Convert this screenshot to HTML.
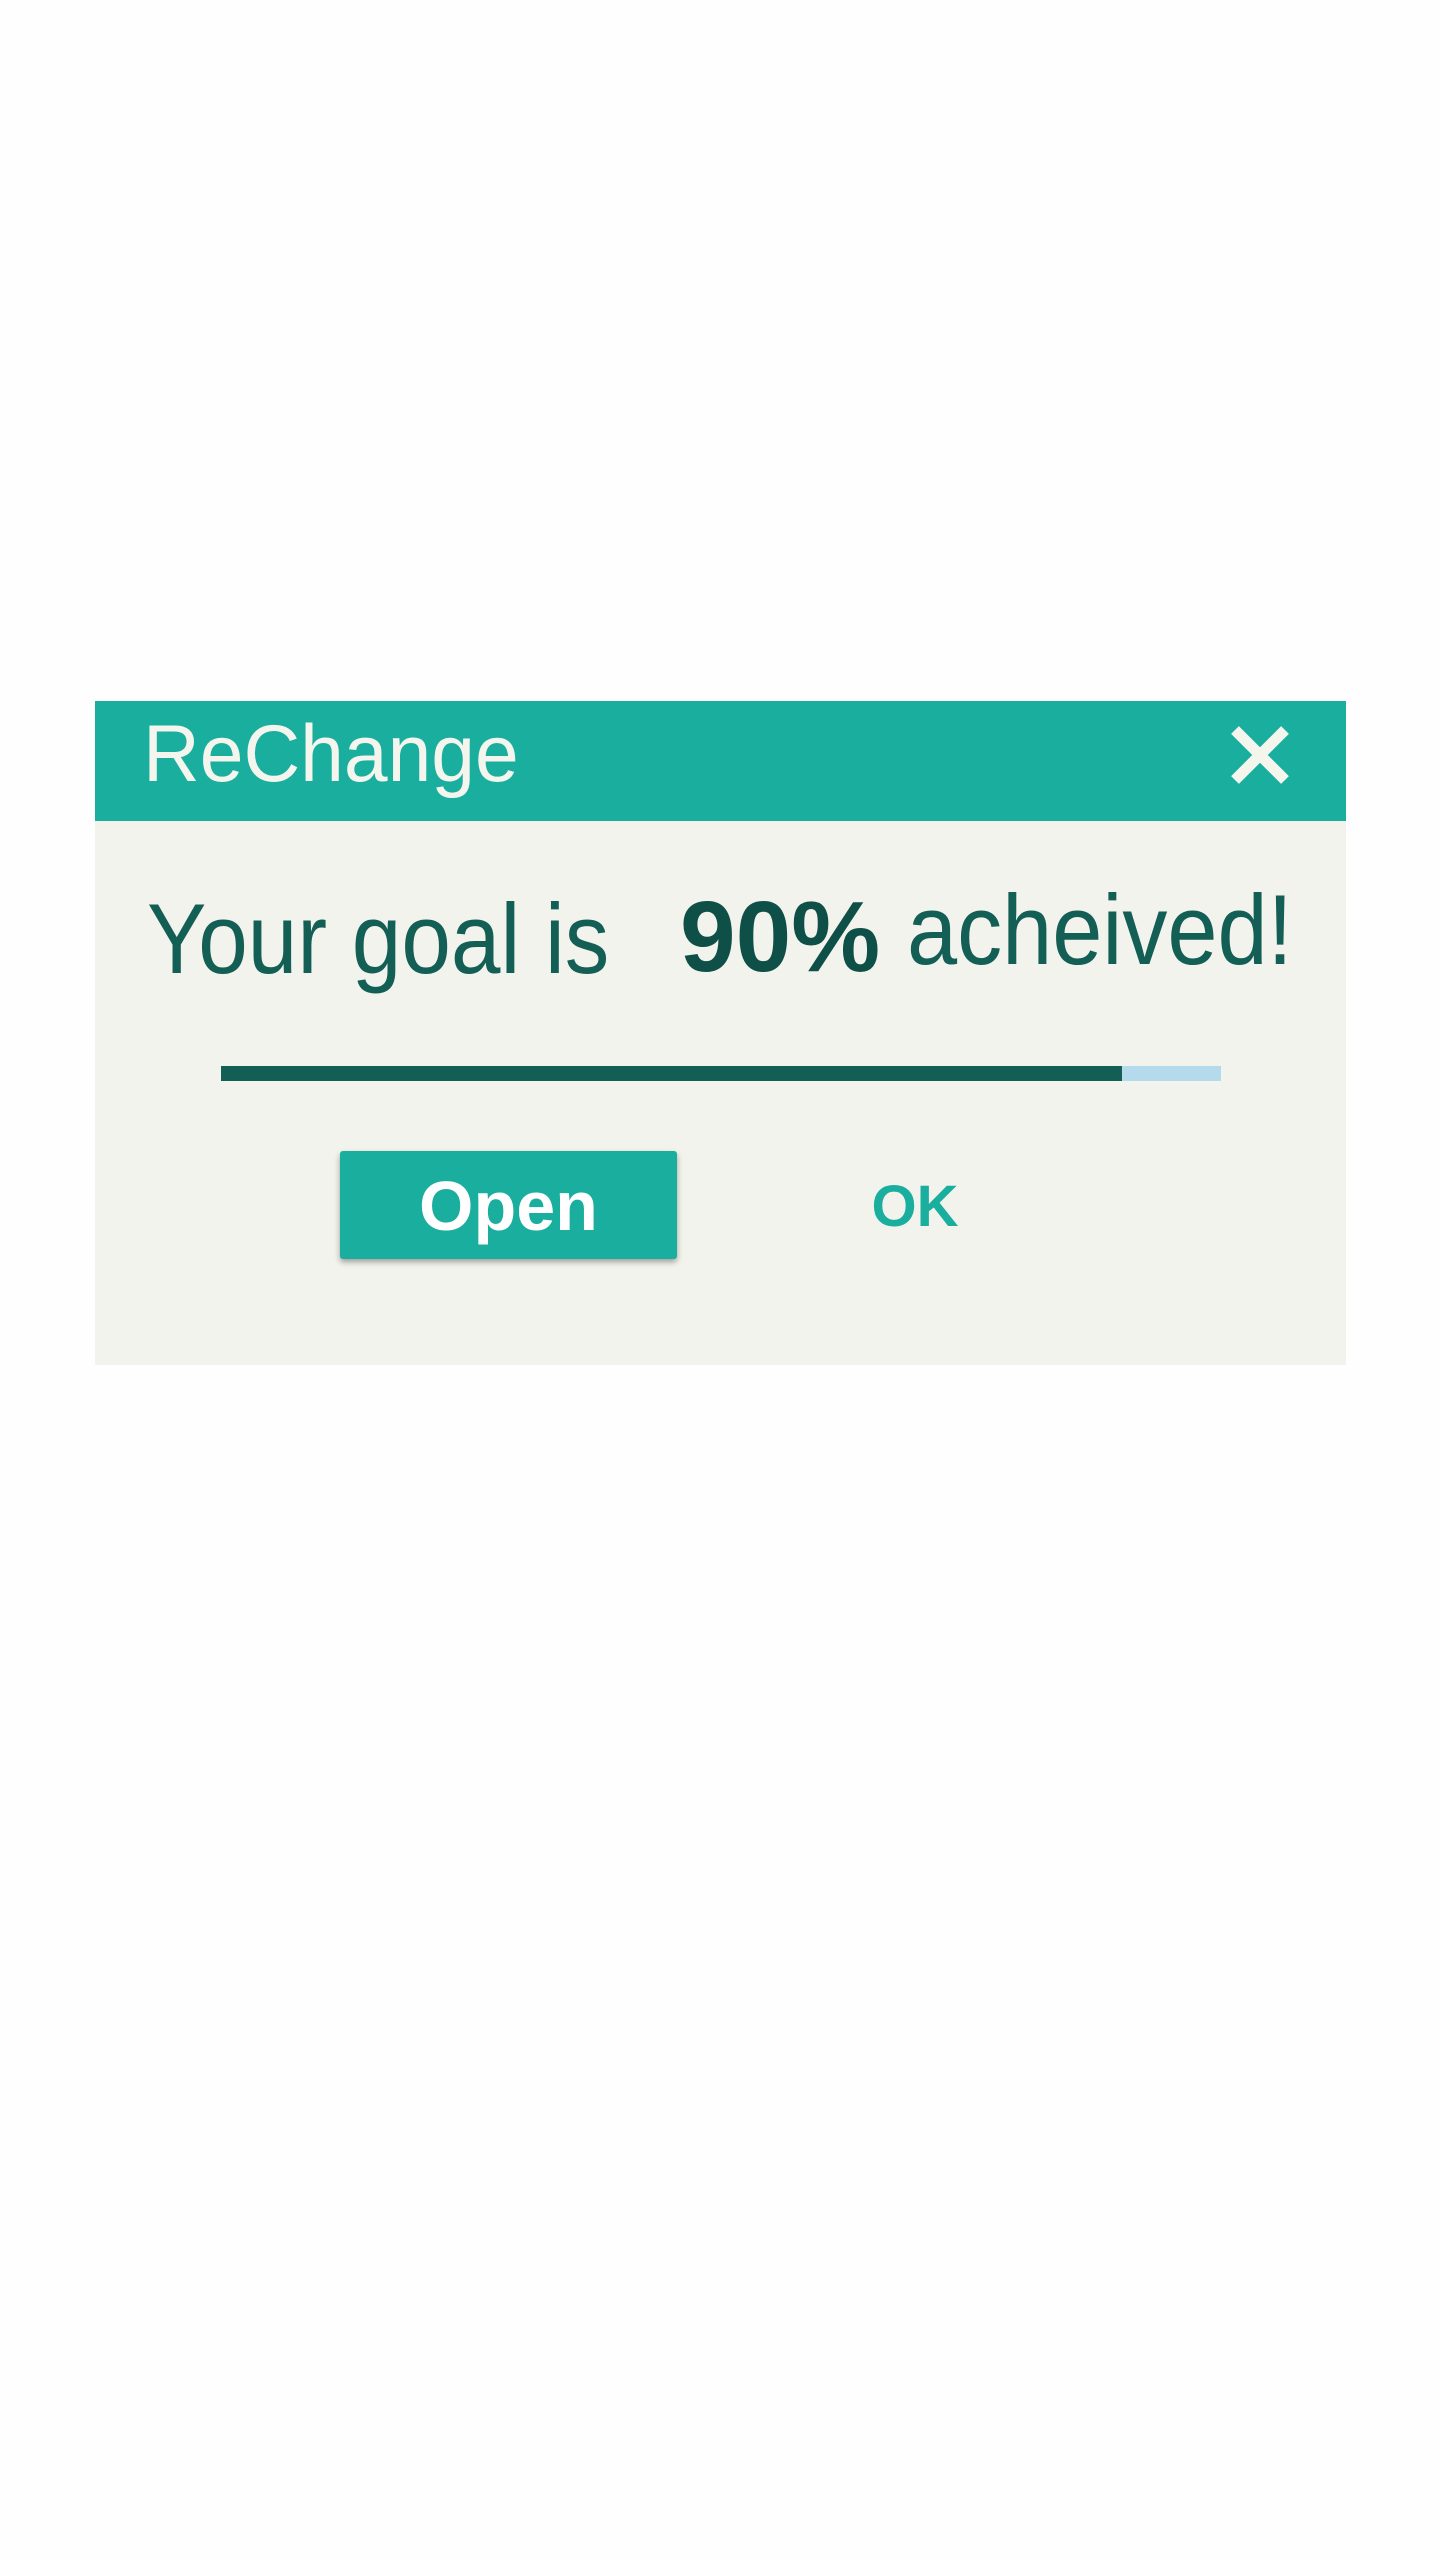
<!DOCTYPE html>
<html><head><meta charset="utf-8"><style>
html,body{margin:0;padding:0;background:#fefefe;width:1440px;height:2560px;overflow:hidden;font-family:"Liberation Sans",Arial,sans-serif}
.dlg{position:absolute;left:95px;top:701px;width:1251px;height:664px;background:#f2f3ec}
.hdr{position:absolute;left:0;top:0;width:100%;height:120px;background:#19ae9e}
.t{position:absolute;white-space:nowrap;line-height:1;transform-origin:0 0}
</style></head><body>
<div class="dlg">
<div class="hdr"></div>
<div class="t" style="left:48px;top:13px;font-size:81px;color:#f4f6ee;transform:scaleX(0.97)">ReChange</div>
<svg style="position:absolute;left:1134px;top:23px" width="62" height="62" viewBox="0 0 62 62"><path d="M6 6L56 56M56 6L6 56" stroke="#f4f6ee" stroke-width="11"/></svg>
<div class="t" style="left:52px;top:188px;font-size:99px;color:#135e55;transform:scaleX(0.9)">Your goal is</div>
<div class="t" style="left:585px;top:186px;font-size:100px;font-weight:bold;color:#0e4f47">90%</div>
<div class="t" style="left:812px;top:179px;font-size:99px;color:#135e55;transform:scaleX(0.91)">acheived!</div>
<div style="position:absolute;left:126px;top:365px;width:1000px;height:15px;background:#b5daec"></div>
<div style="position:absolute;left:126px;top:365px;width:901px;height:15px;background:#135e55"></div>
<div style="position:absolute;left:245px;top:450px;width:337px;height:108px;background:#19ae9e;border-radius:3px;box-shadow:0 3px 6px rgba(0,0,0,.35)"></div>
<div class="t" style="left:245px;top:470px;width:337px;text-align:center;font-size:70px;font-weight:bold;color:#fff">Open</div>
<div class="t" style="left:720px;top:477px;width:200px;text-align:center;font-size:58px;font-weight:bold;color:#19ae9e">OK</div>
</div>
</body></html>
